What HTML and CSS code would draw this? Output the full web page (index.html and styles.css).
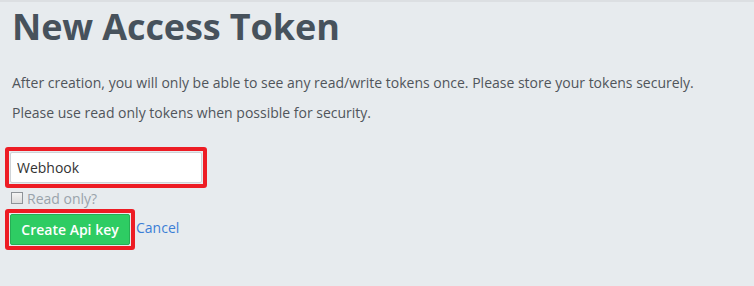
FILE: index.html
```html
<!DOCTYPE html>
<html lang="en">
<head>
  <meta charset="UTF-8" />
  <title>New Access Token</title>
  <link rel="stylesheet" href="styles.css">
</head>
<body>
  <div class="page">
    <h1>New Access Token</h1>
    <p>After creation, you will only be able to see any read/write tokens once. Please store your tokens securely.</p>
    <p>Please use read only tokens when possible for security.</p>

    <form class="token-form">
      <div class="highlight">
        <input type="text" class="name-input" value="Webhook" />
      </div>
      <label class="check">
        <input type="checkbox" />
        <span>Read only?</span>
      </label>
      <div class="actions">
        <div class="highlight">
          <button type="button" class="btn-create">Create Api key</button>
        </div>
        <a href="#" class="cancel">Cancel</a>
      </div>
    </form>
  </div>
</body>
</html>
```

FILE: styles.css
```css
* {
  box-sizing: border-box;
  font-family: "Open Sans", Arial, sans-serif;
}
body {
  margin: 0;
  background: #e7ebee;
  border-top: 2px solid #dcdfe2;
  color: #4a4f55;
}
.page {
  padding: 0 12px;
}
h1 {
  margin: 0;
  padding-top: 2px;
  font-size: 36px;
  line-height: 46px;
  font-weight: 700;
  letter-spacing: -0.1px;
  color: #47525c;
}
p {
  margin: 0;
  font-size: 14px;
  line-height: 30px;
  color: #50555b;
}
p:first-of-type {
  margin-top: 18px;
}
.token-form {
  margin-top: 19px;
  margin-left: -7px;
}
.highlight {
  display: inline-block;
  border: 4px solid #ed1c24;
  border-radius: 3px;
  padding: 1px;
}
.name-input {
  display: block;
  width: 192px;
  height: 31px;
  padding: 0 6px;
  border: 1px solid #cfd3d7;
  border-radius: 2px;
  font-size: 14px;
  color: #333;
  background: #fff;
  outline: none;
}
.check {
  display: flex;
  align-items: center;
  gap: 4px;
  margin: 1px 0 0 6px;
  font-size: 14px;
  color: #9aa3ab;
  height: 18px;
}
.check input {
  appearance: none;
  margin: 0;
  width: 12px;
  height: 12px;
  border: 1px solid #8e9398;
  background: linear-gradient(#f4f4f4, #dcdcdc);
}
.actions {
  display: flex;
  align-items: center;
  margin-top: 2px;
}
.btn-create {
  display: block;
  width: 120px;
  height: 31px;
  border: 1px solid #27ae55;
  border-radius: 2px;
  background: #2ecc63;
  color: #fff;
  font-size: 14px;
  font-weight: 600;
  cursor: pointer;
}
.cancel {
  margin-left: 1px;
  margin-top: -4px;
  font-size: 14px;
  color: #3b7ed6;
  text-decoration: none;
}
```
